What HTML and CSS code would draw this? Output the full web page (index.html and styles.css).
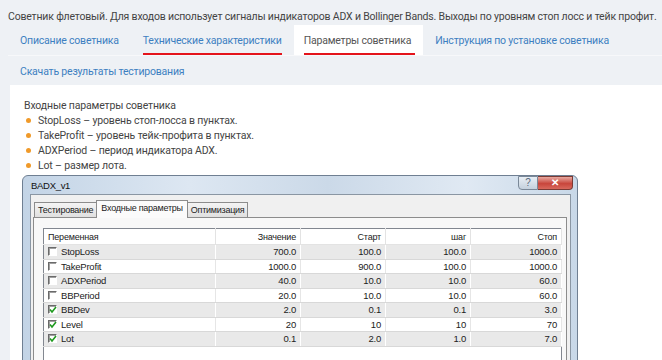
FILE: index.html
```html
<!DOCTYPE html>
<html>

<head>
    <meta charset="utf-8">
    <title>BADX_v1</title>
    <link rel="stylesheet" href="styles.css">
</head>

<body>
    <p class="intro">Советник флетовый. Для входов использует сигналы индикаторов ADX и Bollinger Bands. Выходы по уровням стоп лосс и тейк профит.</p>
    <nav class="tabs">
        <div class="tab-row">
            <a class="tab">Описание советника</a>
            <a class="tab"><span class="marked">Технические характеристики</span></a>
            <a class="tab active"><span class="marked">Параметры советника</span></a>
            <a class="tab">Инструкция по установке советника</a>
        </div>
        <div class="tab-row">
            <a class="tab">Скачать результаты тестирования</a>
        </div>
    </nav>
    <section class="panel">
        <p class="lead">Входные параметры советника</p>
        <ul class="params">
            <li>StopLoss – уровень стоп-лосса в пунктах.</li>
            <li>TakeProfit – уровень тейк-профита в пунктах.</li>
            <li>ADXPeriod – период индикатора ADX.</li>
            <li>Lot – размер лота.</li>
        </ul>
        <div class="window">
            <div class="titlebar">
                <span class="title">BADX_v1</span>
                <div class="controls">
                    <span class="btn-help">?</span>
                    <span class="btn-close">✕</span>
                </div>
            </div>
            <div class="client">
                <div class="wtabs">
                    <span class="wtab">Тестирование</span>
                    <span class="wtab current">Входные параметры</span>
                    <span class="wtab">Оптимизация</span>
                </div>
                <div class="wpanel">
                    <table class="grid">
                        <thead>
                            <tr>
                                <th class="name">Переменная</th>
                                <th>Значение</th>
                                <th>Старт</th>
                                <th>шаг</th>
                                <th>Стоп</th>
                            </tr>
                        </thead>
                        <tbody>
                            <tr>
                                <td class="name"><span class="box"></span>StopLoss</td>
                                <td>700.0</td><td>100.0</td><td>100.0</td><td>1000.0</td>
                            </tr>
                            <tr>
                                <td class="name"><span class="box"></span>TakeProfit</td>
                                <td>1000.0</td><td>900.0</td><td>100.0</td><td>1000.0</td>
                            </tr>
                            <tr>
                                <td class="name"><span class="box"></span>ADXPeriod</td>
                                <td>40.0</td><td>10.0</td><td>10.0</td><td>60.0</td>
                            </tr>
                            <tr>
                                <td class="name"><span class="box"></span>BBPeriod</td>
                                <td>20.0</td><td>10.0</td><td>10.0</td><td>60.0</td>
                            </tr>
                            <tr>
                                <td class="name"><span class="box checked"><svg viewBox="0 0 8 8" width="8" height="8"><path d="M1 3.5 L3 6 L7 1" fill="none" stroke="#1e9a1e" stroke-width="1.6"/></svg></span>BBDev</td>
                                <td>2.0</td><td>0.1</td><td>0.1</td><td>3.0</td>
                            </tr>
                            <tr>
                                <td class="name"><span class="box checked"><svg viewBox="0 0 8 8" width="8" height="8"><path d="M1 3.5 L3 6 L7 1" fill="none" stroke="#1e9a1e" stroke-width="1.6"/></svg></span>Level</td>
                                <td>20</td><td>10</td><td>10</td><td>70</td>
                            </tr>
                            <tr>
                                <td class="name"><span class="box checked"><svg viewBox="0 0 8 8" width="8" height="8"><path d="M1 3.5 L3 6 L7 1" fill="none" stroke="#1e9a1e" stroke-width="1.6"/></svg></span>Lot</td>
                                <td>0.1</td><td>2.0</td><td>1.0</td><td>7.0</td>
                            </tr>
                        </tbody>
                    </table>
                    <div class="grid-rest"></div>
                </div>
            </div>
        </div>
    </section>
</body>

</html>
```

FILE: styles.css
```css
* {
    box-sizing: border-box;
    margin: 0;
    padding: 0;
}

body {
    background-color: #eef1f5;
    color: #444;
    font-family: Roboto, "Noto Sans", sans-serif;
    height: 360px;
    overflow: hidden;
}

.intro {
    font-size: 10.5px;
    letter-spacing: -0.18px;
    line-height: 14px;
    padding: 10px 0 0 8px;
    white-space: nowrap;
}

.tabs {
    padding-left: 8px;
}

.tab-row {
    align-items: stretch;
    display: flex;
    height: 30px;
    white-space: nowrap;
}

.tab-row:first-child {
    margin-top: 1px;
}

.tab-row + .tab-row {
    border-top: 1px solid #f7f8fa;
}

.tab {
    color: #3d7fc1;
    font-size: 10.5px;
    letter-spacing: -0.2px;
    line-height: 14px;
    padding: 9px 12px 0;
}

.marked {
    border-bottom: 2px solid #e4141b;
    display: inline-block;
    padding-bottom: 5px;
}

.tab.active {
    background-color: #fff;
    color: #555;
    padding: 9px 8px 0 10px;
}

.tab.active .marked {
    padding-right: 4px;
}

.panel {
    background-color: #fff;
    height: 276px;
    margin-left: 10px;
    overflow: hidden;
    padding: 13px 0 0 14px;
}

.lead {
    font-size: 10.5px;
    letter-spacing: -0.15px;
    line-height: 15px;
}

.params {
    font-size: 10.5px;
    letter-spacing: -0.15px;
    line-height: 15px;
    list-style: none;
}

.params li {
    padding-left: 14px;
    position: relative;
}

.params li::before {
    background-color: #f09a2a;
    border-radius: 50%;
    content: "";
    height: 5px;
    left: 2px;
    position: absolute;
    top: 5px;
    width: 5px;
}

.window {
    background: linear-gradient(90deg, #c3d4e6 0%, #dde7f2 30%, #cbd9e8 55%, #e0e9f3 80%, #c8d8e8 100%);
    border: 1px solid #6f7f92;
    border-radius: 6px 6px 0 0;
    font-family: "Liberation Sans", Arial, sans-serif;
    height: 200px;
    margin: 2px 0 0 -2px;
    padding: 0 6px 0 7px;
    position: relative;
    width: 556px;
}

.titlebar {
    height: 18px;
}

.title {
    color: #111;
    display: block;
    font-size: 9.5px;
    letter-spacing: -0.3px;
    line-height: 20px;
    padding-left: 1px;
}

.controls {
    display: flex;
    position: absolute;
    right: 4px;
    top: 0;
}

.btn-help {
    background: linear-gradient(#e8eef5, #c4d0dd);
    border: 1px solid #7a8898;
    border-radius: 0 0 0 4px;
    color: #5a6a7c;
    font-size: 10px;
    height: 14px;
    line-height: 12px;
    text-align: center;
    width: 20px;
}

.btn-close {
    background: linear-gradient(#e8a9a0, #c8463c 55%, #d8685c);
    border: 1px solid #7a3a34;
    border-left: none;
    border-radius: 0 0 4px 0;
    color: #fff;
    font-size: 10px;
    font-weight: bold;
    height: 14px;
    line-height: 12px;
    text-align: center;
    width: 35px;
}

.client {
    background-color: #f0f0f0;
    border: 1px solid #8a96a3;
    height: 200px;
    padding: 4px 3px 0 2px;
}

.wtabs {
    align-items: flex-end;
    display: flex;
    height: 18px;
    padding-left: 1px;
}

.wtab {
    background: linear-gradient(#f4f4f4, #e0e0e0);
    border: 1px solid #8c8c8c;
    border-bottom: none;
    color: #222;
    font-size: 9px;
    height: 15px;
    letter-spacing: -0.25px;
    line-height: 14px;
    padding: 0 3px;
}

.wtab.current {
    background: #fbfbfb;
    height: 18px;
    line-height: 15px;
    margin-bottom: -1px;
    padding: 0 4px;
    position: relative;
}

.wtab + .wtab {
    margin-left: -1px;
}

.wpanel {
    background-color: #f8f8f8;
    border: 1px solid #8c8c8c;
    height: 160px;
    padding: 10px 5px 0 9px;
}

.grid {
    background-color: #fff;
    border: 1px solid #828790;
    border-bottom: none;
    border-collapse: collapse;
    color: #222;
    font-size: 9px;
    letter-spacing: -0.2px;
    table-layout: fixed;
    width: 519px;
}

.grid th {
    border-bottom: 1px solid #e3e3e3;
    border-right: 1px solid #e3e3e3;
    font-weight: normal;
    height: 16px;
    padding-right: 4px;
    text-align: right;
}

.grid th:nth-child(1) { width: 172px; }
.grid th:nth-child(2) { width: 85px; }
.grid th:nth-child(3) { width: 85px; }
.grid th:nth-child(4) { width: 85px; }

.grid td {
    border-bottom: 1px solid #d8d8d8;
    border-right: 1px solid #e6e6e6;
    font-size: 9.5px;
    height: 14.5px;
    line-height: 13px;
    padding-right: 4px;
    text-align: right;
}

.grid tbody tr:nth-child(odd) td {
    background-color: #e9e9e9;
    border-right-color: #fff;
}

.grid .name {
    padding-left: 4px;
    text-align: left;
}

.box {
    background-color: #fff;
    border: 1px solid #fff;
    border-left-color: #6a6a6a;
    border-top-color: #6a6a6a;
    box-shadow: inset 1px 1px 0 #a0a0a0;
    display: inline-block;
    height: 9px;
    margin-right: 4px;
    position: relative;
    top: 1px;
    width: 9px;
}

.box svg {
    display: block;
}

.grid-rest {
    background-color: #fff;
    border: 1px solid #828790;
    border-top: none;
    height: 30px;
    width: 519px;
}
```
